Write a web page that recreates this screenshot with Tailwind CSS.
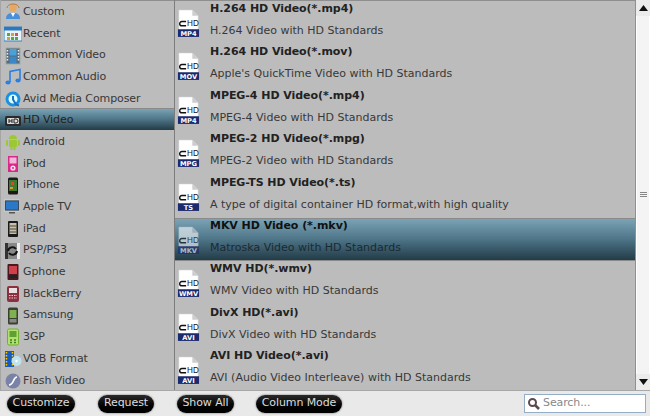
<!DOCTYPE html>
<html><head><meta charset="utf-8"><title>Format</title>
<script src="https://cdn.jsdelivr.net/npm/@tailwindcss/browser@4"></script></head>
<body class="m-0 overflow-hidden bg-[#bcbcbc]">
<svg width="0" height="0" class="absolute"><defs>
<symbol id="doc" viewBox="0 0 24 30"><path d="M2 1H16L22 7V22H2Z" fill="#fff" stroke="#ddd" stroke-width="0.6"/><path d="M16 1V7H22Z" fill="#ccc"/><path d="M9.500 13H5a2.200 2.200 0 0 0 0 4.400H9.500" fill="none" stroke="#111" stroke-width="1.500"/><rect x="1" y="21" width="22" height="8" fill="#1c2a6e"/></symbol>
</defs></svg>
<div class="w-[650px] h-[416px] flex flex-col font-['DejaVu_Sans',sans-serif] text-[11px] text-[#383838] overflow-hidden">
<div class="h-[390px] flex overflow-hidden shadow-[inset_0_1px_0_#8f8f8f]">
<!-- sidebar -->
<div class="w-[175px] h-full flex flex-col border-r border-[#7d7d7d] border-l-[1px] border-l-[#a5a5a5] tracking-[-0.1px]">
<div class="flex-1 flex items-center gap-[1px] pl-[3px] pt-[3px]"><svg class="w-[18px] h-[18px] shrink-0" viewBox="0 0 18 18"><circle cx="9" cy="5" r="3.6" fill="#e8a860"/><path d="M3 5a6 4 0 0 1 12 0" fill="none" stroke="#b87830" stroke-width="1"/><path d="M2 16c0-5 3-6 7-6s7 1 7 6z" fill="#4a90d8"/><path d="M7 10l2 4 2-4z" fill="#fff"/></svg><span>Custom</span></div>
<div class="flex-1 flex items-center gap-[1px] pl-[3px] pt-[3px]"><svg class="w-[18px] h-[18px] shrink-0" viewBox="0 0 18 18"><rect x="0" y="2" width="18" height="14" fill="#e8f4fa" stroke="#3a80b8"/><rect x="0" y="2" width="18" height="3.5" fill="#2a78c0"/><rect x="3" y="8" width="3" height="3" fill="#5aa838"/><rect x="7" y="8" width="3" height="3" fill="#d8a030"/><rect x="11" y="8" width="3" height="3" fill="#d85050"/><rect x="3" y="12" width="3" height="3" fill="#d8a030"/><rect x="7" y="12" width="3" height="3" fill="#5aa838"/><rect x="11" y="12" width="3" height="3" fill="#5aa838"/></svg><span>Recent</span></div>
<div class="flex-1 flex items-center gap-[1px] pl-[3px] pt-[3px]"><svg class="w-[18px] h-[18px] shrink-0" viewBox="0 0 18 18"><rect x="2" y="1" width="14" height="16" fill="#5a6a78" stroke="#9aa"/><rect x="5.5" y="2" width="7" height="6.5" fill="#4aa0d8"/><rect x="5.5" y="9.5" width="7" height="6.5" fill="#3a88c8"/><path d="M3.5 3v12M14.500 3v12" stroke="#eee" stroke-width="1.500" stroke-dasharray="1.500 1.500"/></svg><span>Common Video</span></div>
<div class="flex-1 flex items-center gap-[1px] pl-[3px] pt-[3px]"><svg class="w-[18px] h-[18px] shrink-0" viewBox="0 0 18 18"><path d="M6 14V3.500L16 1.500V12" fill="none" stroke="#2a80e0" stroke-width="1.600"/><ellipse cx="4" cy="14.500" rx="2.600" ry="2" fill="#2a80e0"/><ellipse cx="14" cy="12.500" rx="2.600" ry="2" fill="#2a80e0"/></svg><span>Common Audio</span></div>
<div class="flex-1 flex items-center gap-[1px] pl-[3px] pt-[3px]"><svg class="w-[18px] h-[18px] shrink-0" viewBox="0 0 18 18"><circle cx="9" cy="9" r="6" fill="#dff" stroke="#1a90e0" stroke-width="3"/><path d="M9 6v3.500l3 5 3 1" fill="none" stroke="#1a70c0" stroke-width="2"/></svg><span>Avid Media Composer</span></div>
<div class="flex-1 flex items-center gap-[1px] pl-[4px] pt-[2px] -ml-[1px] bg-gradient-to-b from-[#7ba3b6] via-[#4d7487] to-[#243c48] border-t border-[#8a8a8a]"><svg class="w-[18px] h-[18px] shrink-0" viewBox="0 0 18 18"><rect x="1" y="4" width="16" height="10" rx="1.500" fill="#2a2a2a"/><rect x="3" y="6" width="12" height="6" rx="1" fill="#ddd"/><path d="M5 7v4M8 7v4M5 9h3M10 7v4h2a2 2 0 0 0 0-4z" fill="none" stroke="#222" stroke-width="1"/></svg><span class="text-[#222]">HD Video</span></div>
<div class="flex-1 flex items-center gap-[1px] pl-[3px] pt-[3px]"><svg class="w-[18px] h-[18px] shrink-0" viewBox="0 0 18 18"><path d="M5 6a4 4 0 0 1 8 0z" fill="#9cc838"/><rect x="5" y="7" width="8" height="7" rx="1" fill="#9cc838"/><rect x="2" y="7" width="2" height="6" rx="1" fill="#9cc838"/><rect x="14" y="7" width="2" height="6" rx="1" fill="#9cc838"/><rect x="6.500" y="14" width="2" height="3" fill="#9cc838"/><rect x="9.500" y="14" width="2" height="3" fill="#9cc838"/></svg><span>Android</span></div>
<div class="flex-1 flex items-center gap-[1px] pl-[3px] pt-[3px]"><svg class="w-[18px] h-[18px] shrink-0" viewBox="0 0 18 18"><rect x="4" y="1" width="10" height="16" fill="#d82888"/><rect x="5.500" y="2.500" width="7" height="6" fill="#f0b8d8"/><circle cx="9" cy="13" r="2.600" fill="#fde"/><circle cx="9" cy="13" r="1" fill="#d82888"/></svg><span>iPod</span></div>
<div class="flex-1 flex items-center gap-[1px] pl-[3px] pt-[3px]"><svg class="w-[18px] h-[18px] shrink-0" viewBox="0 0 18 18"><rect x="4" y="0.500" width="10" height="17" rx="1.500" fill="#1a1a1a"/><rect x="5" y="3" width="8" height="11" fill="#3f7a30"/><rect x="7" y="5" width="3" height="3" fill="#d84a28"/><rect x="6" y="10" width="3" height="2" fill="#d8a028"/></svg><span>iPhone</span></div>
<div class="flex-1 flex items-center gap-[1px] pl-[3px] pt-[3px]"><svg class="w-[18px] h-[18px] shrink-0" viewBox="0 0 18 18"><rect x="0.500" y="2" width="15" height="11" fill="#3a4a58" stroke="#e8e8e8" stroke-width="0.600"/><rect x="2" y="3.500" width="12" height="8" fill="#2a78c8"/><rect x="5" y="14" width="6" height="1.500" fill="#555"/></svg><span>Apple TV</span></div>
<div class="flex-1 flex items-center gap-[1px] pl-[3px] pt-[3px]"><svg class="w-[18px] h-[18px] shrink-0" viewBox="0 0 18 18"><rect x="4" y="1" width="10" height="16" rx="1" fill="#1a1a1a"/><rect x="5.500" y="3" width="7" height="11" fill="#c8c0a8"/><path d="M5.500 6h7M5.500 9h7M5.500 12h7" stroke="#444"/></svg><span>iPad</span></div>
<div class="flex-1 flex items-center gap-[1px] pl-[3px] pt-[3px]"><svg class="w-[18px] h-[18px] shrink-0" viewBox="0 0 18 18"><rect x="1" y="1" width="15" height="16" fill="#888"/><rect x="1" y="1" width="3" height="16" fill="#333"/><rect x="13" y="1" width="3" height="16" fill="#eee"/><path d="M4 9a4.500 4.500 0 0 1 8-2M13 9a4.500 4.500 0 0 1-8 2" fill="none" stroke="#111" stroke-width="2"/></svg><span>PSP/PS3</span></div>
<div class="flex-1 flex items-center gap-[1px] pl-[3px] pt-[3px]"><svg class="w-[18px] h-[18px] shrink-0" viewBox="0 0 18 18"><rect x="3.500" y="1" width="11" height="16" rx="1" fill="#4a1820"/><rect x="5" y="3" width="8" height="8" fill="#d04048"/><rect x="5" y="12" width="8" height="3" fill="#222"/></svg><span>Gphone</span></div>
<div class="flex-1 flex items-center gap-[1px] pl-[3px] pt-[3px]"><svg class="w-[18px] h-[18px] shrink-0" viewBox="0 0 18 18"><rect x="3" y="1" width="12" height="16" rx="2" fill="#8c3040"/><rect x="5" y="3" width="8" height="5" fill="#e8e0e0"/><path d="M5 10.500h8M5 13h8" stroke="#f0d0d0" stroke-dasharray="1.500 1"/></svg><span>BlackBerry</span></div>
<div class="flex-1 flex items-center gap-[1px] pl-[3px] pt-[3px]"><svg class="w-[18px] h-[18px] shrink-0" viewBox="0 0 18 18"><rect x="4" y="0.500" width="10" height="17" rx="1.500" fill="#38402f"/><rect x="5.500" y="3" width="7" height="8" fill="#80b050"/><rect x="5.500" y="12" width="7" height="3.500" fill="#888"/></svg><span>Samsung</span></div>
<div class="flex-1 flex items-center gap-[1px] pl-[3px] pt-[3px]"><svg class="w-[18px] h-[18px] shrink-0" viewBox="0 0 18 18"><rect x="3.500" y="1" width="11" height="16" rx="1.500" fill="#b0e070" stroke="#70b030"/><rect x="5.500" y="3" width="7" height="6" fill="#60a030"/><path d="M6 12h2M10 12h2M6 14.500h2M10 14.500h2" stroke="#408020" stroke-width="1.500"/></svg><span>3GP</span></div>
<div class="flex-1 flex items-center gap-[1px] pl-[3px] pt-[3px]"><svg class="w-[18px] h-[18px] shrink-0" viewBox="0 0 18 18"><rect x="1" y="1" width="9" height="16" fill="#1a5ab8"/><path d="M2.500 2v14M8.500 2v14" stroke="#fc0" stroke-width="1.500" stroke-dasharray="1.500 1.500"/><circle cx="12.500" cy="11" r="5" fill="#bfe4f0"/><circle cx="12.500" cy="11" r="1.200" fill="#fff"/></svg><span>VOB Format</span></div>
<div class="flex-1 flex items-center gap-[1px] pl-[3px] pt-[3px]"><svg class="w-[18px] h-[18px] shrink-0" viewBox="0 0 18 18"><circle cx="9" cy="9" r="7.500" fill="#7a82a8"/><path d="M13 5c-4 0-3 8-8 8" fill="none" stroke="#fff" stroke-width="1.600"/></svg><span>Flash Video</span></div>
</div>
<!-- format list -->
<div class="w-[460px] h-full flex flex-col pt-[1px]">
<div class="h-[43.4px] shrink-0 flex"><svg class="w-[23px] h-[29px] ml-[2px] mt-[8px] shrink-0" viewBox="0 0 24 30"><use href="#doc"/><text x="10.500" y="18" font-size="8.500" fill="#111" font-family="Liberation Sans">HD</text><text x="12" y="28" font-size="7" font-weight="700" fill="#fff" text-anchor="middle" font-family="DejaVu Sans">MP4</text></svg><div class="ml-[10px] flex flex-col"><span class="font-bold text-[#222] tracking-[-0.05px] h-[22px] leading-[15px]">H.264 HD Video(*.mp4)</span><span class="leading-[15px]">H.264 Video with HD Standards</span></div></div>
<div class="h-[43.4px] shrink-0 flex"><svg class="w-[23px] h-[29px] ml-[2px] mt-[8px] shrink-0" viewBox="0 0 24 30"><use href="#doc"/><text x="10.500" y="18" font-size="8.500" fill="#111" font-family="Liberation Sans">HD</text><text x="12" y="28" font-size="7" font-weight="700" fill="#fff" text-anchor="middle" font-family="DejaVu Sans">MOV</text></svg><div class="ml-[10px] flex flex-col"><span class="font-bold text-[#222] tracking-[-0.05px] h-[22px] leading-[15px]">H.264 HD Video(*.mov)</span><span class="leading-[15px]">Apple's QuickTime Video with HD Standards</span></div></div>
<div class="h-[43.4px] shrink-0 flex"><svg class="w-[23px] h-[29px] ml-[2px] mt-[8px] shrink-0" viewBox="0 0 24 30"><use href="#doc"/><text x="10.500" y="18" font-size="8.500" fill="#111" font-family="Liberation Sans">HD</text><text x="12" y="28" font-size="7" font-weight="700" fill="#fff" text-anchor="middle" font-family="DejaVu Sans">MP4</text></svg><div class="ml-[10px] flex flex-col"><span class="font-bold text-[#222] tracking-[-0.05px] h-[22px] leading-[15px]">MPEG-4 HD Video(*.mp4)</span><span class="leading-[15px]">MPEG-4 Video with HD Standards</span></div></div>
<div class="h-[43.4px] shrink-0 flex"><svg class="w-[23px] h-[29px] ml-[2px] mt-[8px] shrink-0" viewBox="0 0 24 30"><use href="#doc"/><text x="10.500" y="18" font-size="8.500" fill="#111" font-family="Liberation Sans">HD</text><text x="12" y="28" font-size="7" font-weight="700" fill="#fff" text-anchor="middle" font-family="DejaVu Sans">MPG</text></svg><div class="ml-[10px] flex flex-col"><span class="font-bold text-[#222] tracking-[-0.05px] h-[22px] leading-[15px]">MPEG-2 HD Video(*.mpg)</span><span class="leading-[15px]">MPEG-2 Video with HD Standards</span></div></div>
<div class="h-[43.4px] shrink-0 flex"><svg class="w-[23px] h-[29px] ml-[2px] mt-[8px] shrink-0" viewBox="0 0 24 30"><use href="#doc"/><text x="10.500" y="18" font-size="8.500" fill="#111" font-family="Liberation Sans">HD</text><text x="12" y="28" font-size="7" font-weight="700" fill="#fff" text-anchor="middle" font-family="DejaVu Sans">TS</text></svg><div class="ml-[10px] flex flex-col"><span class="font-bold text-[#222] tracking-[-0.05px] h-[22px] leading-[15px]">MPEG-TS HD Video(*.ts)</span><span class="leading-[15px]">A type of digital container HD format,with high quality</span></div></div>
<div class="h-[43.4px] shrink-0 flex bg-gradient-to-b from-[#7ba3b6] via-[#4d7487] to-[#243c48] border-y border-[#8a8a8a]"><svg class="w-[23px] h-[29px] ml-[2px] mt-[7px] shrink-0 opacity-60" viewBox="0 0 24 30"><use href="#doc"/><text x="10.500" y="18" font-size="8.500" fill="#111" font-family="Liberation Sans">HD</text><text x="12" y="28" font-size="7" font-weight="700" fill="#fff" text-anchor="middle" font-family="DejaVu Sans">MKV</text></svg><div class="ml-[10px] flex flex-col -mt-[1px]"><span class="font-bold text-[#111] tracking-[-0.05px] h-[22px] leading-[15px]">MKV HD Video (*.mkv)</span><span class="leading-[15px] text-[#1a2a32]">Matroska Video with HD Standards</span></div></div>
<div class="h-[43.4px] shrink-0 flex"><svg class="w-[23px] h-[29px] ml-[2px] mt-[8px] shrink-0" viewBox="0 0 24 30"><use href="#doc"/><text x="10.500" y="18" font-size="8.500" fill="#111" font-family="Liberation Sans">HD</text><text x="12" y="28" font-size="7" font-weight="700" fill="#fff" text-anchor="middle" font-family="DejaVu Sans">WMV</text></svg><div class="ml-[10px] flex flex-col"><span class="font-bold text-[#222] tracking-[-0.05px] h-[22px] leading-[15px]">WMV HD(*.wmv)</span><span class="leading-[15px]">WMV Video with HD Standards</span></div></div>
<div class="h-[43.4px] shrink-0 flex"><svg class="w-[23px] h-[29px] ml-[2px] mt-[8px] shrink-0" viewBox="0 0 24 30"><use href="#doc"/><text x="10.500" y="18" font-size="8.500" fill="#111" font-family="Liberation Sans">HD</text><text x="12" y="28" font-size="7" font-weight="700" fill="#fff" text-anchor="middle" font-family="DejaVu Sans">AVI</text></svg><div class="ml-[10px] flex flex-col"><span class="font-bold text-[#222] tracking-[-0.05px] h-[22px] leading-[15px]">DivX HD(*.avi)</span><span class="leading-[15px]">DivX Video with HD Standards</span></div></div>
<div class="h-[43.4px] shrink-0 flex"><svg class="w-[23px] h-[29px] ml-[2px] mt-[8px] shrink-0" viewBox="0 0 24 30"><use href="#doc"/><text x="10.500" y="18" font-size="8.500" fill="#111" font-family="Liberation Sans">HD</text><text x="12" y="28" font-size="7" font-weight="700" fill="#fff" text-anchor="middle" font-family="DejaVu Sans">AVI</text></svg><div class="ml-[10px] flex flex-col"><span class="font-bold text-[#222] tracking-[-0.05px] h-[22px] leading-[15px]">AVI HD Video(*.avi)</span><span class="leading-[15px]">AVI (Audio Video Interleave) with HD Standards</span></div></div>
</div>
<!-- scrollbar -->
<div class="w-[15px] h-full flex flex-col bg-[#fafafa] border-l border-[#8f8f8f]">
<div class="h-[16px] bg-[#ececec] flex items-center justify-center"><svg width="9" height="6" viewBox="0 0 9 6"><path d="M4.500 0L9 6H0Z" fill="#111"/></svg></div>
<div class="flex-1 flex items-center justify-center bg-[#f4f4f4] border-x border-[#fff]"><svg width="7" height="6" viewBox="0 0 7 6"><path d="M0 .5h7M0 2.500h7M0 4.500h7" stroke="#888"/></svg></div>
<div class="h-[16px] bg-[#ececec] flex items-center justify-center"><svg width="9" height="6" viewBox="0 0 9 6"><path d="M0 0H9L4.500 6Z" fill="#111"/></svg></div>
</div>
</div>
<!-- bottom bar -->
<div class="flex-1 bg-[#e9e9e9] border-t border-[#a8a8a8] flex items-center pl-[7px] text-[#dcdcdc] tracking-[-0.1px]">
<span class="w-[68px] h-[18px] rounded-full bg-gradient-to-b from-[#2a2a2a] to-[#000] shadow-[0_0_2px_#555] flex items-center justify-center">Customize</span>
<span class="ml-[23px] w-[56px] h-[18px] rounded-full bg-gradient-to-b from-[#2a2a2a] to-[#000] shadow-[0_0_2px_#555] flex items-center justify-center">Request</span>
<span class="ml-[23px] w-[57px] h-[18px] rounded-full bg-gradient-to-b from-[#2a2a2a] to-[#000] shadow-[0_0_2px_#555] flex items-center justify-center">Show All</span>
<span class="ml-[22px] w-[86px] h-[18px] rounded-full bg-gradient-to-b from-[#2a2a2a] to-[#000] shadow-[0_0_2px_#555] flex items-center justify-center">Column Mode</span>
<div class="ml-auto mr-[4px] w-[122px] h-[19px] bg-white border border-[#93aec8] flex items-center pl-[2px] gap-[3px] text-[#888]"><svg width="13" height="13" viewBox="0 0 13 13"><circle cx="5.500" cy="5.500" r="3.500" fill="none" stroke="#5a4a50" stroke-width="2"/><path d="M8 8l4 4" stroke="#5a4a50" stroke-width="2.500"/></svg><span>Search...</span></div>
</div>
</div>
</body></html>
